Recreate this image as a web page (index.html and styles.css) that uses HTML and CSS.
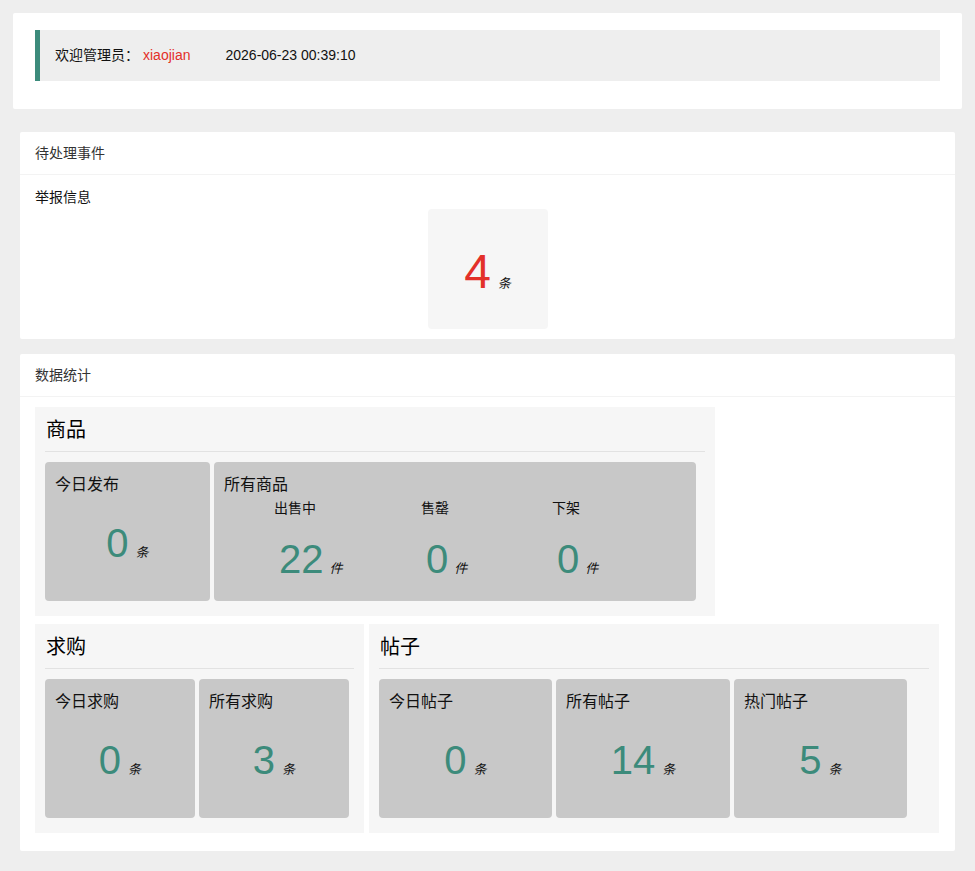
FILE: index.html
```html
<!DOCTYPE html>
<html lang="zh-CN">
<head>
<meta charset="utf-8">
<title>控制台</title>
<link rel="stylesheet" href="styles.css">
</head>
<body>
<div class="welcome-card">
  <div class="quote">
    <span>欢迎管理员：</span><span class="user">xiaojian</span><span class="time">2026-06-23 00:39:10</span>
  </div>
</div>

<div class="main">
  <div class="card pending">
    <div class="card-header">待处理事件</div>
    <div class="card-body">
      <div class="label">举报信息</div>
      <div class="report-box">
        <div class="report-line"><span class="report-num">4</span><span class="unit">条</span></div>
      </div>
    </div>
  </div>

  <div class="card stats">
    <div class="card-header">数据统计</div>
    <div class="card-body stats-body">
      <div class="row">
        <div class="section sec-goods">
          <h2 class="sec-title">商品</h2>
          <div class="sec-line"></div>
          <div class="tiles">
            <div class="tile w165">
              <div class="tile-title">今日发布</div>
              <div class="tile-value"><span class="num">0</span><span class="unit">条</span></div>
            </div>
            <div class="tile w482">
              <div class="tile-title">所有商品</div>
              <div class="subcols">
                <div class="subcol c1">
                  <div class="sub-label">出售中</div>
                  <div class="sub-value"><span class="num">22</span><span class="unit">件</span></div>
                </div>
                <div class="subcol c2">
                  <div class="sub-label">售罄</div>
                  <div class="sub-value"><span class="num">0</span><span class="unit">件</span></div>
                </div>
                <div class="subcol c3">
                  <div class="sub-label">下架</div>
                  <div class="sub-value"><span class="num">0</span><span class="unit">件</span></div>
                </div>
              </div>
            </div>
          </div>
        </div>
      </div>
      <div class="row row2">
        <div class="section sec-want">
          <h2 class="sec-title">求购</h2>
          <div class="sec-line"></div>
          <div class="tiles">
            <div class="tile w150">
              <div class="tile-title">今日求购</div>
              <div class="tile-value"><span class="num">0</span><span class="unit">条</span></div>
            </div>
            <div class="tile w150">
              <div class="tile-title">所有求购</div>
              <div class="tile-value"><span class="num">3</span><span class="unit">条</span></div>
            </div>
          </div>
        </div>
        <div class="section sec-post">
          <h2 class="sec-title">帖子</h2>
          <div class="sec-line"></div>
          <div class="tiles">
            <div class="tile w173">
              <div class="tile-title">今日帖子</div>
              <div class="tile-value"><span class="num">0</span><span class="unit">条</span></div>
            </div>
            <div class="tile w174">
              <div class="tile-title">所有帖子</div>
              <div class="tile-value"><span class="num">14</span><span class="unit">条</span></div>
            </div>
            <div class="tile w173">
              <div class="tile-title">热门帖子</div>
              <div class="tile-value"><span class="num">5</span><span class="unit">条</span></div>
            </div>
          </div>
        </div>
      </div>
    </div>
  </div>
</div>
</body>
</html>
```

FILE: styles.css
```css
* { box-sizing: border-box; }

html, body {
  margin: 0;
  padding: 0;
}

body {
  background: #eeeeee;
  font-family: "Liberation Sans", "Noto Sans CJK SC", sans-serif;
  font-size: 14px;
  color: #000;
  width: 975px;
  height: 871px;
  overflow: hidden;
}

/* welcome card */
.welcome-card {
  margin: 13px 13px 0 13px;
  background: #fff;
  padding: 17px 22px 28px 22px;
  border-radius: 2px;
}

.quote {
  background: #eeeeee;
  border-left: 5px solid #3c8b7b;
  padding: 15px;
  line-height: 21px;
  font-size: 14px;
  color: #111;
  white-space: nowrap;
}

.quote .user {
  color: #e3302a;
  margin-left: 4px;
}

.quote .time {
  margin-left: 35px;
}

/* cards */
.main {
  padding: 23px 20px 0 20px;
}

.card {
  background: #fff;
  border-radius: 2px;
  margin-bottom: 15px;
}

.card-header {
  height: 43px;
  line-height: 42px;
  padding: 0 15px;
  border-bottom: 1px solid #f3f3f3;
  font-size: 14px;
  color: #333;
}

.card-body {
  padding: 10px 15px;
}

.label {
  line-height: 24px;
  font-size: 14px;
  color: #111;
}

.report-box {
  width: 120px;
  height: 120px;
  margin: 0 auto;
  background: #f6f6f6;
  border-radius: 4px;
  padding-top: 39px;
  text-align: center;
}

.report-line {
  line-height: 48px;
  height: 48px;
  white-space: nowrap;
}

.report-num {
  font-size: 48px;
  line-height: 48px;
  color: #e3302a;
}

.unit {
  font-size: 13px;
  line-height: 1;
  font-style: italic;
  color: #111;
  margin-left: 7px;
}

/* stats */
.stats-body {
  padding-bottom: 10px;
}

.row {
  display: flex;
  gap: 5px;
  margin-bottom: 8px;
}

.section {
  background: #f6f6f6;
  padding: 10px 10px 15px 10px;
}

.sec-goods { width: 680px; }
.sec-want { width: 329px; }
.sec-post { width: 570px; }

.sec-title {
  margin: 0;
  font-size: 20px;
  font-weight: normal;
  line-height: 26px;
  height: 26px;
  padding-left: 1px;
}

.sec-line {
  height: 1px;
  background: #e2e2e2;
  margin: 8px 0 10px 0;
}

.tiles {
  display: flex;
  gap: 4px;
}

.tile {
  background: #c8c8c8;
  border-radius: 4px;
  height: 139px;
  padding: 10px;
}

.w165 { width: 165px; }
.w482 { width: 482px; }
.w150 { width: 150px; }
.w173 { width: 173px; }
.w174 { width: 174px; }

.tile-title {
  font-size: 16px;
  line-height: 26px;
  color: #111;
}

.tile-value {
  text-align: center;
  margin-top: 22px;
  line-height: 46px;
  height: 46px;
  white-space: nowrap;
}

.num {
  font-size: 40px;
  color: #3c8b7b;
}

.subcols {
  display: flex;
  padding-left: 50px;
}

.subcol.c1 { width: 147px; }
.subcol.c2 { width: 131px; }

.sub-label {
  font-size: 14px;
  line-height: 20px;
  color: #111;
}

.sub-value {
  margin-top: 18px;
  padding-left: 5px;
  line-height: 46px;
  height: 46px;
  white-space: nowrap;
}

.sub-value .unit {
  margin-left: 6px;
}
```
